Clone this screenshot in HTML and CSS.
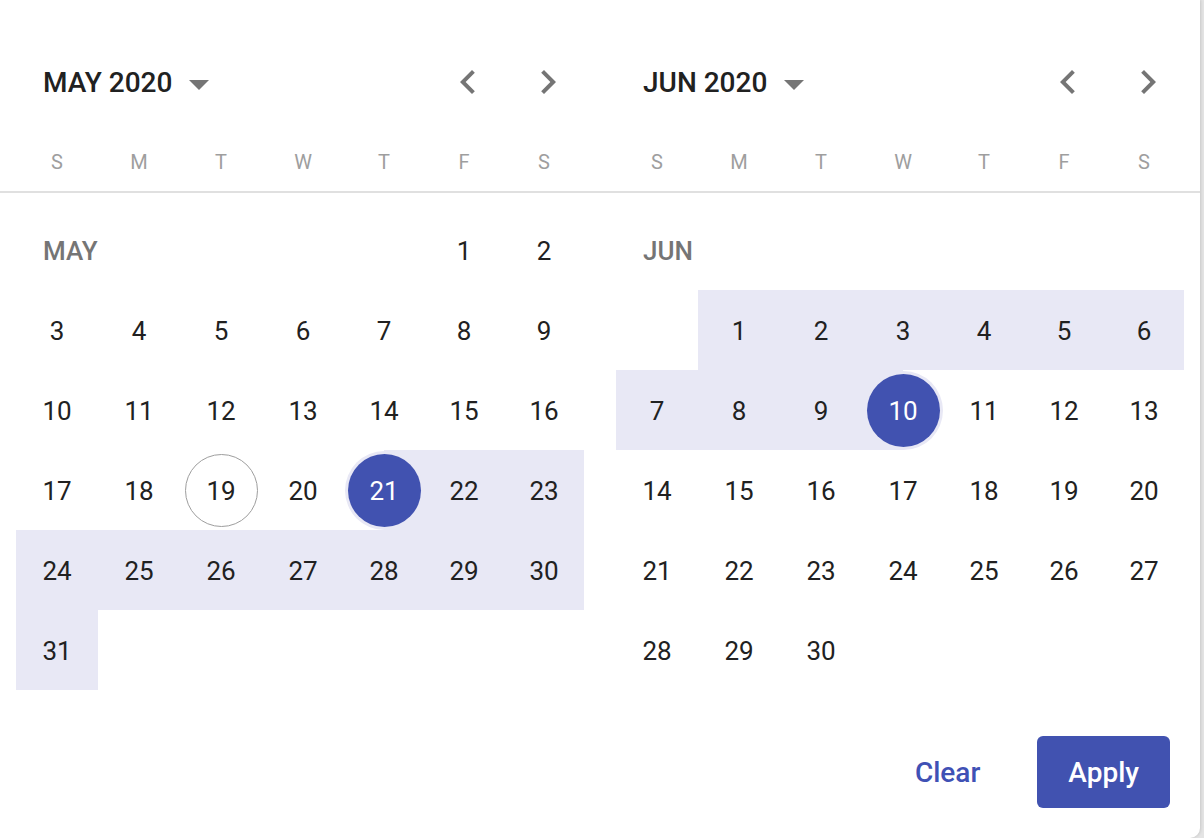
FILE: index.html
```html
<!DOCTYPE html>
<html lang="en">
<head>
  <meta charset="UTF-8" />
  <title>Date range picker</title>
  <link rel="stylesheet" href="styles.css">
</head>
<body>
  <div class="picker">
    <!-- headers -->
    <div class="picker-top">
      <div class="months">
        <div class="month">
          <div class="month-header">
            <div class="month-title">MAY 2020
              <svg class="drop" viewBox="0 0 24 24"><path d="M7 10l5 5 5-5z"/></svg>
            </div>
            <div class="nav">
              <button class="nav-btn"><svg viewBox="0 0 24 24"><path d="M15.41 7.41L14 6l-6 6 6 6 1.41-1.41L10.83 12z"/></svg></button>
              <button class="nav-btn"><svg viewBox="0 0 24 24"><path d="M10 6L8.59 7.41 13.17 12l-4.58 4.59L10 18l6-6z"/></svg></button>
            </div>
          </div>
          <div class="weekdays"><span>S</span><span>M</span><span>T</span><span>W</span><span>T</span><span>F</span><span>S</span></div>
        </div>
        <div class="month">
          <div class="month-header">
            <div class="month-title">JUN 2020
              <svg class="drop" viewBox="0 0 24 24"><path d="M7 10l5 5 5-5z"/></svg>
            </div>
            <div class="nav">
              <button class="nav-btn"><svg viewBox="0 0 24 24"><path d="M15.41 7.41L14 6l-6 6 6 6 1.41-1.41L10.83 12z"/></svg></button>
              <button class="nav-btn"><svg viewBox="0 0 24 24"><path d="M10 6L8.59 7.41 13.17 12l-4.58 4.59L10 18l6-6z"/></svg></button>
            </div>
          </div>
          <div class="weekdays"><span>S</span><span>M</span><span>T</span><span>W</span><span>T</span><span>F</span><span>S</span></div>
        </div>
      </div>
    </div>

    <!-- day grids -->
    <div class="months picker-body">
      <div class="days">
        <div class="month-label short">MAY</div>
        <div class="day"><span>1</span></div>
        <div class="day"><span>2</span></div>

        <div class="day"><span>3</span></div>
        <div class="day"><span>4</span></div>
        <div class="day"><span>5</span></div>
        <div class="day"><span>6</span></div>
        <div class="day"><span>7</span></div>
        <div class="day"><span>8</span></div>
        <div class="day"><span>9</span></div>

        <div class="day"><span>10</span></div>
        <div class="day"><span>11</span></div>
        <div class="day"><span>12</span></div>
        <div class="day"><span>13</span></div>
        <div class="day"><span>14</span></div>
        <div class="day"><span>15</span></div>
        <div class="day"><span>16</span></div>

        <div class="day"><span>17</span></div>
        <div class="day"><span>18</span></div>
        <div class="day today"><span>19</span></div>
        <div class="day"><span>20</span></div>
        <div class="day selected range-start"><span>21</span></div>
        <div class="day in-range"><span>22</span></div>
        <div class="day in-range"><span>23</span></div>

        <div class="day in-range"><span>24</span></div>
        <div class="day in-range"><span>25</span></div>
        <div class="day in-range"><span>26</span></div>
        <div class="day in-range"><span>27</span></div>
        <div class="day in-range"><span>28</span></div>
        <div class="day in-range"><span>29</span></div>
        <div class="day in-range"><span>30</span></div>

        <div class="day in-range"><span>31</span></div>
      </div>

      <div class="days">
        <div class="month-label full">JUN</div>

        <div class="day empty"></div>
        <div class="day in-range"><span>1</span></div>
        <div class="day in-range"><span>2</span></div>
        <div class="day in-range"><span>3</span></div>
        <div class="day in-range"><span>4</span></div>
        <div class="day in-range"><span>5</span></div>
        <div class="day in-range"><span>6</span></div>

        <div class="day in-range"><span>7</span></div>
        <div class="day in-range"><span>8</span></div>
        <div class="day in-range"><span>9</span></div>
        <div class="day selected range-end"><span>10</span></div>
        <div class="day"><span>11</span></div>
        <div class="day"><span>12</span></div>
        <div class="day"><span>13</span></div>

        <div class="day"><span>14</span></div>
        <div class="day"><span>15</span></div>
        <div class="day"><span>16</span></div>
        <div class="day"><span>17</span></div>
        <div class="day"><span>18</span></div>
        <div class="day"><span>19</span></div>
        <div class="day"><span>20</span></div>

        <div class="day"><span>21</span></div>
        <div class="day"><span>22</span></div>
        <div class="day"><span>23</span></div>
        <div class="day"><span>24</span></div>
        <div class="day"><span>25</span></div>
        <div class="day"><span>26</span></div>
        <div class="day"><span>27</span></div>

        <div class="day"><span>28</span></div>
        <div class="day"><span>29</span></div>
        <div class="day"><span>30</span></div>
      </div>
    </div>

    <!-- actions -->
    <div class="actions">
      <button class="btn btn-text">Clear</button>
      <button class="btn btn-primary">Apply</button>
    </div>
  </div>
</body>
</html>
```

FILE: styles.css
```css
* { box-sizing: border-box; margin: 0; padding: 0; }
body {
  font-family: Roboto, 'Liberation Sans', sans-serif;
  background: #e4e4e4;
  overflow: hidden;
}
.picker {
  width: 1200px;
  height: 838px;
  background: #fff;
  border-radius: 0 0 10px 0;
  box-shadow: 1px 0 3px rgba(0, 0, 0, 0.12);
}
.picker-top {
  padding-top: 42px;
  padding-bottom: 9px;
  border-bottom: 2px solid #e0e0e0;
}
.months {
  display: flex;
  gap: 32px;
  padding: 0 16px;
}
.month,
.days {
  width: 568px;
}
.month-header {
  height: 80px;
  display: flex;
  align-items: center;
}
.month-title {
  display: flex;
  align-items: center;
  padding-left: 27px;
  font-size: 28px;
  font-weight: 500;
  color: #212121;
}
.drop {
  width: 48px;
  height: 48px;
  margin-left: 3px;
  margin-top: 4px;
  fill: #757575;
}
.nav {
  margin-left: auto;
  margin-right: 12px;
  display: flex;
  gap: 32px;
}
.nav-btn {
  width: 48px;
  height: 48px;
  border: none;
  background: none;
  cursor: pointer;
}
.nav-btn svg {
  width: 48px;
  height: 48px;
  fill: #757575;
  display: block;
}
.weekdays,
.days {
  display: grid;
  grid-template-columns: 82px 82px 82px 82px 80px 80px 80px;
}
.weekdays {
  height: 40px;
  margin-top: 20px;
  align-items: center;
  text-align: center;
  font-size: 20px;
  color: #9e9e9e;
}
.picker-body {
  padding-top: 17px;
}
.days {
  grid-auto-rows: 80px;
}
.month-label {
  display: flex;
  align-items: center;
  padding-left: 27px;
  padding-top: 1px;
  font-size: 26px;
  font-weight: 500;
  color: #757575;
}
.month-label.short { grid-column: span 5; }
.month-label.full { grid-column: span 7; }
.day {
  display: flex;
  align-items: center;
  justify-content: center;
  font-size: 26px;
  color: #212121;
}
.day span {
  width: 73px;
  height: 73px;
  padding-top: 1px;
  border-radius: 50%;
  display: flex;
  align-items: center;
  justify-content: center;
}
.day.in-range {
  background: #e8e8f5;
}
.day.range-start {
  background: linear-gradient(to right, transparent 50%, #e8e8f5 50%);
}
.day.range-end {
  background: linear-gradient(to left, transparent 50%, #e8e8f5 50%);
}
.day.selected span {
  background: #4152b0;
  color: #fff;
  box-shadow: 0 0 0 3px #e8e8f5;
}
.day.today span {
  border: 1.5px solid #9e9e9e;
}
.actions {
  display: flex;
  justify-content: flex-end;
  gap: 26px;
  padding: 46px 30px 0 0;
}
.btn {
  height: 72px;
  padding: 0 31px;
  border: none;
  border-radius: 6px;
  font-family: inherit;
  font-size: 28px;
  font-weight: 500;
  cursor: pointer;
}
.btn-text {
  background: none;
  color: #3f51b5;
}
.btn-primary {
  background: #4152b0;
  color: #fff;
}
```
